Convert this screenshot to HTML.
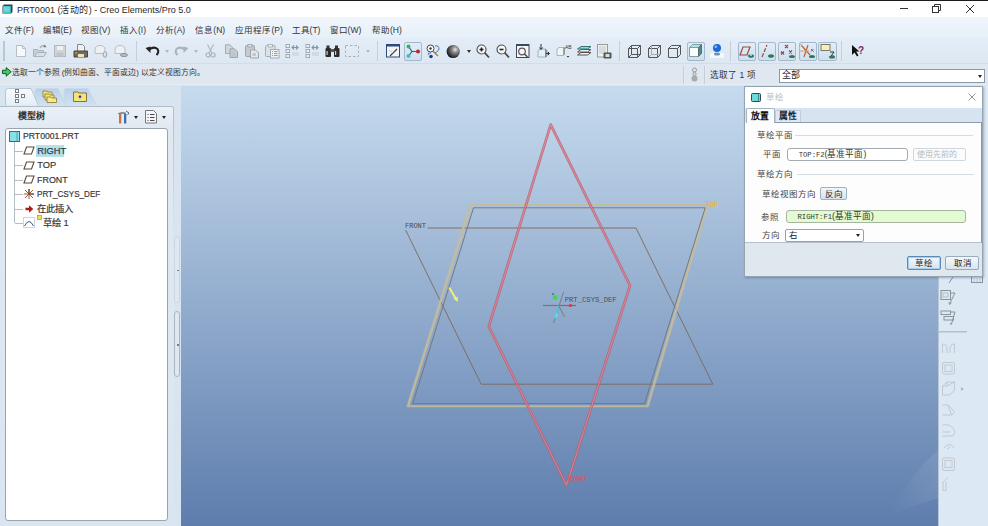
<!DOCTYPE html>
<html lang="zh-CN">
<head>
<meta charset="utf-8">
<style>
*{margin:0;padding:0;box-sizing:border-box}
html,body{width:988px;height:526px;overflow:hidden;background:#dfe9f3;font-family:"Liberation Sans",sans-serif;color:#222}
.a{position:absolute}
.t{position:absolute;white-space:nowrap;line-height:1}
svg{position:absolute;overflow:visible}
#topline{left:0;top:0;width:988px;height:1px;background:#1a1a1a}
#title{left:0;top:1px;width:988px;height:16px;background:#fff}
#menubar{left:0;top:17px;width:988px;height:21px;background:linear-gradient(#f1f6fc,#e7eff8)}
#toolbar{left:0;top:38px;width:988px;height:26px;background:linear-gradient(#e4edf7,#dce7f2)}
#status{left:0;top:64px;width:988px;height:21px;background:#dfe8f1}
#main{left:0;top:85px;width:988px;height:441px;background:#d8e5f1}
#vp{left:181px;top:86px;width:757px;height:440px;background:linear-gradient(#c6dbee,#5e7dad)}
#rtb{left:938px;top:86px;width:50px;height:440px;background:#dce8f3}
#tree{left:5px;top:128px;width:163px;height:393px;background:#fff;border:1px solid #9aa4ae;border-radius:3px}
.menu{font-size:8.5px;color:#333;top:26px}
.sep{position:absolute;width:2px;background:linear-gradient(90deg,#b4c0cc,#f4f8fc)}
.hb{position:absolute;border:1px solid #a4b8cc;border-radius:2px;background:linear-gradient(#e2edf8,#cddff0)}
.tr{font-size:9.3px;color:#333;-webkit-text-stroke:0.2px #444}
.dl{font-size:8.5px;color:#444}
.dd{position:absolute;width:0;height:0;border-left:2.5px solid transparent;border-right:2.5px solid transparent;border-top:3px solid #555}
</style>
</head>
<body>
<div id="topline" class="a"></div>
<div id="title" class="a"></div>
<!-- title icon -->
<svg style="left:2px;top:4px" width="11" height="10" viewBox="0 0 11 10"><path d="M0.5 2L2 0.5H10.5V8L9 9.5H0.5Z" fill="#2e4650"/><rect x="1" y="2" width="7.8" height="7" fill="#4cc4c8"/><rect x="2" y="3" width="5.5" height="4.5" fill="#6ad8dc"/></svg>
<div class="t" style="left:16.8px;top:4.6px;font-size:9.6px;color:#2a2a2a;transform:scaleX(0.94);transform-origin:0 0">PRT0001 (活动的) - Creo Elements/Pro 5.0</div>
<!-- window controls -->
<div class="a" style="left:900px;top:8px;width:8px;height:1px;background:#333"></div>
<svg style="left:932px;top:4px" width="10" height="9" viewBox="0 0 10 9"><rect x="0.5" y="2.5" width="6" height="6" fill="none" stroke="#333"/><path d="M2.5 2.5V0.5H8.5V6.5H6.5" fill="none" stroke="#333"/></svg>
<svg style="left:966px;top:4.5px" width="8" height="8" viewBox="0 0 8 8"><path d="M0 0L8 8M8 0L0 8" stroke="#333" stroke-width="1"/></svg>

<div id="menubar" class="a"></div>
<div class="t menu" style="left:5px">文件(F)</div>
<div class="t menu" style="left:42.5px">编辑(E)</div>
<div class="t menu" style="left:81px">视图(V)</div>
<div class="t menu" style="left:120px">插入(I)</div>
<div class="t menu" style="left:155.8px">分析(A)</div>
<div class="t menu" style="left:195.3px">信息(N)</div>
<div class="t menu" style="left:235.4px">应用程序(P)</div>
<div class="t menu" style="left:291.6px">工具(T)</div>
<div class="t menu" style="left:329.6px">窗口(W)</div>
<div class="t menu" style="left:372px">帮助(H)</div>

<div id="toolbar" class="a"></div>
<div class="a" style="left:0;top:63px;width:988px;height:1px;background:#d2dde8"></div><div class="a" style="left:0;top:64px;width:988px;height:1px;background:#eef4f9"></div>
<!-- grip -->
<div class="a" style="left:3px;top:41px;width:2px;height:20px;background:#b9c6d3"></div>
<!-- new -->
<svg style="left:15px;top:44px" width="14" height="14" viewBox="0 0 14 14"><path d="M1.5 1.5H7.5L10.5 4.5V12.5H1.5Z" fill="#f6f8fa" stroke="#b8bec6"/><path d="M7.5 1.5V4.5H10.5" fill="none" stroke="#b8bec6"/></svg>
<!-- open -->
<svg style="left:33px;top:44px" width="15" height="14" viewBox="0 0 15 14"><path d="M0.5 5.5H4.5L5.5 6.5H10.5V12.5H0.5Z" fill="#c9cfd5" stroke="#aab2ba"/><path d="M1.5 12.5L4 8.5H13.5L11 12.5Z" fill="#d9dee3" stroke="#aab2ba"/><path d="M7 4C8 1.5 11 1 12.5 2.5" fill="none" stroke="#a8b0b8" stroke-width="1.3"/><path d="M11.5 0.5L13.5 3L10.5 3.5Z" fill="#707880"/></svg>
<!-- save -->
<svg style="left:54px;top:44px" width="13" height="14" viewBox="0 0 13 14"><rect x="0.5" y="1.5" width="11" height="11" fill="#d0d5da" stroke="#b0b7be"/><rect x="3" y="2" width="6" height="4" fill="#eef1f4"/><rect x="2.5" y="8.5" width="7" height="4" fill="#c0c6cc"/></svg>
<!-- print -->
<svg style="left:73px;top:44px" width="16" height="15" viewBox="0 0 16 15"><path d="M4.5 0.5H9.5L11.5 2.5V7.5H4.5Z" fill="#eef0f2" stroke="#888"/><path d="M1 7H14.5V13H1Z" fill="#6d6a60" stroke="#4a473f"/><rect x="5" y="10" width="6" height="3" fill="#f0e0c0"/><rect x="2" y="8" width="2" height="1.5" fill="#d0903a"/></svg>
<!-- icon5 -->
<svg style="left:94px;top:44px" width="15" height="14" viewBox="0 0 15 14"><path d="M1 6Q1 1.5 6 1.5Q11 1.5 11 6V9.5H1Z" fill="#eef1f4" stroke="#b8bec6"/><ellipse cx="11" cy="10.5" rx="1.8" ry="2.8" fill="#dde2e7" stroke="#9aa2aa"/></svg>
<!-- icon6 -->
<svg style="left:114px;top:44px" width="15" height="14" viewBox="0 0 15 14"><path d="M1 6Q1 1.5 6 1.5Q11 1.5 11 6V9.5H1Z" fill="#eef1f4" stroke="#b8bec6"/><ellipse cx="10" cy="11" rx="3.5" ry="1.6" fill="#b6bcc2" stroke="#8c949c"/></svg>
<div class="sep" style="left:135.5px;top:41px;height:20px"></div>
<!-- undo -->
<svg style="left:145px;top:45px" width="15" height="12" viewBox="0 0 15 12"><path d="M4 4.5Q9 1 12.5 4Q14.5 7 11.5 10" fill="none" stroke="#222" stroke-width="2"/><path d="M0.5 3L5.5 1.5L5.5 8Z" fill="#222"/></svg>
<div class="dd" style="left:164.5px;top:50px;border-top-color:#b0b8c0"></div>
<!-- redo -->
<svg style="left:174px;top:45px" width="15" height="12" viewBox="0 0 15 12"><path d="M11 4.5Q6 1 2.5 4Q0.5 7 3.5 10" fill="none" stroke="#aab2ba" stroke-width="2"/><path d="M14.5 3L9.5 1.5L9.5 8Z" fill="#aab2ba"/></svg>
<div class="dd" style="left:193.5px;top:50px;border-top-color:#b0b8c0"></div>
<!-- cut -->
<svg style="left:205px;top:44px" width="11" height="14" viewBox="0 0 11 14"><path d="M2.5 0.5L7 9M8.5 0.5L4 9" stroke="#b0b8c0" stroke-width="1.2"/><circle cx="3" cy="11" r="2" fill="none" stroke="#a8b0b8" stroke-width="1.2"/><circle cx="8" cy="11" r="2" fill="none" stroke="#a8b0b8" stroke-width="1.2"/></svg>
<!-- copy -->
<svg style="left:225px;top:44px" width="14" height="15" viewBox="0 0 14 15"><path d="M0.5 0.8H5L7.5 3.3V9.5H0.5Z" fill="#d2d7dc" stroke="#a4acb4"/><path d="M5 4.8H9.5L12.5 7.8V13.5H5Z" fill="#c8ced4" stroke="#9ca4ac"/><path d="M6.5 8H10M6.5 10H11M6.5 12H11" stroke="#b0b8c0" stroke-width="0.8"/></svg>
<!-- paste -->
<svg style="left:245px;top:44px" width="15" height="15" viewBox="0 0 15 15"><rect x="0.5" y="1.5" width="9" height="11" rx="1" fill="#c4cad0" stroke="#9ca4ac"/><rect x="3" y="0.5" width="4" height="2.5" fill="#e0e4e8" stroke="#9ca4ac" stroke-width="0.8"/><path d="M5.5 6H10.5L13.5 9V14H5.5Z" fill="#e4e8ec" stroke="#9ca4ac"/><rect x="7.5" y="9" width="3.5" height="3" fill="#c0c6cc"/></svg>
<!-- paste special -->
<svg style="left:265px;top:44px" width="15" height="15" viewBox="0 0 15 15"><rect x="0.5" y="1.5" width="9.5" height="11" rx="1" fill="#dde1e5" stroke="#a4acb4"/><rect x="3" y="0.5" width="4.5" height="2.5" fill="#eceef0" stroke="#a4acb4" stroke-width="0.8"/><rect x="5.5" y="5.5" width="8.5" height="8.5" fill="#f0f2f4" stroke="#a4acb4"/><path d="M7 7.5H8M9 7.5H12.5M7 9.5H8M9 9.5H12.5M7 11.5H8M9 11.5H12.5" stroke="#8a929a" stroke-width="0.9"/></svg>
<!-- tree icons -->
<svg style="left:285px;top:44px" width="16" height="15" viewBox="0 0 16 15"><rect x="1" y="0.5" width="3.5" height="3" fill="#eef0f2" stroke="#a0a8b0"/><rect x="1" y="5.5" width="3.5" height="3" fill="#eef0f2" stroke="#a0a8b0"/><rect x="1" y="10.5" width="3.5" height="3" fill="#eef0f2" stroke="#a0a8b0"/><path d="M7 3.5H13M9 1.5L7 3.5L9 5.5M11 1.5L13 3.5L11 5.5" fill="none" stroke="#7a9aa8" stroke-width="1.1"/><path d="M7 9H14M7 11H14" stroke="#c4cad0"/></svg>
<svg style="left:305px;top:44px" width="16" height="15" viewBox="0 0 16 15"><rect x="1" y="0.5" width="3.5" height="3" fill="#eef0f2" stroke="#a0a8b0"/><rect x="1" y="5.5" width="3.5" height="3" fill="#eef0f2" stroke="#a0a8b0"/><rect x="1" y="10.5" width="3.5" height="3" fill="#eef0f2" stroke="#a0a8b0"/><path d="M7 3.5H13M9 1.5L7 3.5L9 5.5M11 1.5L13 3.5L11 5.5" fill="none" stroke="#7a9aa8" stroke-width="1.1"/><path d="M7 9H14M7 11H14" stroke="#c4cad0"/></svg>
<!-- binoculars -->
<svg style="left:325px;top:45px" width="15" height="13" viewBox="0 0 15 13"><rect x="0.5" y="3" width="5.5" height="9" rx="1" fill="#2a2a2a"/><rect x="9" y="3" width="5.5" height="9" rx="1" fill="#2a2a2a"/><rect x="1.5" y="0.5" width="3" height="3" fill="#333"/><rect x="10" y="0.5" width="3" height="3" fill="#333"/><rect x="5.5" y="4" width="4" height="3" fill="#555"/><rect x="1.5" y="6" width="1.2" height="4" fill="#ccc"/><rect x="10" y="6" width="1.2" height="4" fill="#ccc"/></svg>
<!-- select box -->
<svg style="left:345px;top:45px" width="15" height="13" viewBox="0 0 15 13"><rect x="0.5" y="0.5" width="13" height="11" fill="none" stroke="#a8b0b8" stroke-dasharray="2.5 2"/></svg>
<div class="dd" style="left:366px;top:50px;border-top-color:#b0b8c0"></div>
<div class="sep" style="left:376.5px;top:41px;height:20px"></div>
<!-- sketch view -->
<svg style="left:386px;top:44px" width="14" height="14" viewBox="0 0 14 14"><rect x="0.5" y="0.5" width="13" height="12.5" fill="#f2f5f8" stroke="#2c4a7a"/><rect x="0.5" y="0.5" width="13" height="2" fill="#2c4a7a"/><path d="M4 12L11 5" stroke="#444" stroke-width="1.3"/><path d="M3 6L7 9" stroke="#c8ccd0"/></svg>
<!-- highlighted csys -->
<div class="hb" style="left:404px;top:41.5px;width:18px;height:19px"></div>
<svg style="left:405px;top:44px" width="16" height="15" viewBox="0 0 16 15"><path d="M3.5 2.5L7 7.5L3.5 12M7 7.5H13" stroke="#2a6a7a" stroke-width="1.2" fill="none"/><circle cx="3.5" cy="2.5" r="2" fill="#3cb060"/><circle cx="3.5" cy="12" r="2" fill="#40c0c0"/><circle cx="13" cy="7.5" r="2" fill="#c02030"/></svg>
<!-- csys2 -->
<svg style="left:426px;top:44px" width="15" height="15" viewBox="0 0 15 15"><circle cx="4.5" cy="4.5" r="3.5" fill="#fff" stroke="#444" stroke-width="1"/><circle cx="4.5" cy="4.5" r="1.2" fill="#333"/><path d="M7 7L12 12" stroke="#b08040" stroke-width="1.5"/><path d="M9 2Q13 1 13 5Q12 8 9 9" fill="none" stroke="#4a78b0"/><circle cx="5" cy="12.5" r="1.8" fill="#203a90"/><path d="M2 11Q2 8 5 9" fill="none" stroke="#4a78b0"/></svg>
<!-- sphere -->
<svg style="left:446px;top:44px" width="15" height="15" viewBox="0 0 15 15"><defs><radialGradient id="sph" cx="0.65" cy="0.35" r="0.7"><stop offset="0" stop-color="#e8e8e8"/><stop offset="0.35" stop-color="#888"/><stop offset="1" stop-color="#111"/></radialGradient></defs><circle cx="7.2" cy="7.5" r="6.6" fill="url(#sph)"/></svg>
<div class="dd" style="left:466.5px;top:50px;border-top-color:#333"></div>
<!-- zoom in -->
<svg style="left:476px;top:44px" width="14" height="15" viewBox="0 0 14 15"><circle cx="5.5" cy="5.5" r="4.5" fill="#fafafa" stroke="#555" stroke-width="1.2"/><path d="M3.5 5.5H7.5M5.5 3.5V7.5" stroke="#222" stroke-width="1.6"/><path d="M8.5 8.5L13 13.5" stroke="#444" stroke-width="1.8"/></svg>
<!-- zoom out -->
<svg style="left:496px;top:44px" width="14" height="15" viewBox="0 0 14 15"><circle cx="5.5" cy="5.5" r="4.5" fill="#fafafa" stroke="#555" stroke-width="1.2"/><path d="M3.5 5.5H7.5" stroke="#222" stroke-width="1.6"/><path d="M8.5 8.5L13 13.5" stroke="#444" stroke-width="1.8"/></svg>
<!-- refit -->
<svg style="left:516px;top:44px" width="14" height="15" viewBox="0 0 14 15"><rect x="0.5" y="0.5" width="12.5" height="13" fill="#f4f6f8" stroke="#445"/><rect x="0.5" y="0.5" width="12.5" height="1.5" fill="#2c4a7a"/><circle cx="6" cy="7.5" r="3.3" fill="none" stroke="#555" stroke-width="1.2"/><path d="M8.5 10L11.5 13" stroke="#444" stroke-width="1.4"/></svg>
<!-- orient -->
<svg style="left:536px;top:44px" width="14" height="15" viewBox="0 0 14 15"><path d="M2 6.5L5 5H9.5V13H2Z" fill="#dff3f3" stroke="#aab"/><path d="M9.5 5V13L11 12V7Z" fill="#9ac" stroke="#889"/><path d="M5 0V5M3.5 3.5L5 5.5L6.5 3.5" stroke="#333" fill="none"/><path d="M10 9.5H13.5M12 8L13.5 9.5L12 11" stroke="#333" fill="none"/></svg>
<!-- saved views -->
<svg style="left:556px;top:44px" width="15" height="15" viewBox="0 0 15 15"><path d="M1 5L3 3.5H7.5V11.5H1Z" fill="#f2f4f6" stroke="#aab2ba"/><path d="M7.5 3.5V11.5L9 10.5V3Z" fill="#889aa8"/><text x="9" y="5" font-size="5" font-family="Liberation Sans" fill="#333">AB</text><path d="M10.5 12L12 13.5L13.5 12Z" fill="#333"/></svg>
<!-- layers -->
<svg style="left:577px;top:44px" width="15" height="15" viewBox="0 0 15 15"><path d="M0.5 11L4 8.5H14L10.5 11Z" fill="#f0f0f0" stroke="#555"/><path d="M0.5 8L4 5.5H14L10.5 8Z" fill="#f0f0f0" stroke="#555"/><path d="M0.5 5L4 2.5H14L10.5 5Z" fill="#7fe0e0" stroke="#3a7070"/></svg>
<!-- model display -->
<svg style="left:597px;top:44px" width="16" height="15" viewBox="0 0 16 15"><rect x="0.5" y="0.5" width="10" height="12.5" fill="#eef0f2" stroke="#999"/><path d="M2 3H9M2 5H9M2 7H9M2 9H9" stroke="#c4c8cc"/><rect x="6.5" y="8.5" width="8" height="6" rx="1" fill="#555"/><rect x="8.5" y="10" width="4" height="3" fill="#ddd"/></svg>
<div class="sep" style="left:619px;top:41px;height:20px"></div>
<!-- wireframe -->
<svg style="left:628px;top:45px" width="14" height="13" viewBox="0 0 14 13"><path d="M0.5 3.5H9.5V12.5H0.5Z M3.5 0.5H12.5V9.5H3.5Z M0.5 3.5L3.5 0.5M9.5 3.5L12.5 0.5M9.5 12.5L12.5 9.5M0.5 12.5L3.5 9.5" fill="none" stroke="#555"/></svg>
<!-- hidden line -->
<svg style="left:648px;top:45px" width="14" height="13" viewBox="0 0 14 13"><path d="M0.5 3.5H9.5V12.5H0.5Z M0.5 3.5L3.5 0.5H12.5V9.5L9.5 12.5M9.5 3.5L12.5 0.5" fill="none" stroke="#555"/><path d="M3.5 0.5V9.5H12.5M0.5 12.5L3.5 9.5" fill="none" stroke="#aaa"/></svg>
<!-- no hidden -->
<svg style="left:668px;top:45px" width="14" height="13" viewBox="0 0 14 13"><path d="M0.5 3.5H9.5V12.5H0.5Z M0.5 3.5L3.5 0.5H12.5V9.5L9.5 12.5M9.5 3.5L12.5 0.5" fill="none" stroke="#555"/></svg>
<!-- shaded highlighted -->
<div class="hb" style="left:687px;top:41.5px;width:18px;height:19px"></div>
<svg style="left:689px;top:44px" width="14" height="14" viewBox="0 0 14 14"><path d="M0.5 3.5H9.5V12.5H0.5Z" fill="#f8fcfc" stroke="#8a9aa0"/><path d="M0.5 3.5L3.5 0.5H12.5L9.5 3.5Z" fill="#a8e8e8" stroke="#8a9aa0"/><path d="M9.5 3.5L12.5 0.5V9.5L9.5 12.5Z" fill="#4a8a8a" stroke="#5a7070"/></svg>
<!-- blue ball -->
<svg style="left:709px;top:43px" width="16" height="16" viewBox="0 0 16 16"><rect x="1" y="10" width="14" height="5" fill="#f4f8fb"/><ellipse cx="8" cy="11" rx="3" ry="1.5" fill="#7090b0"/><circle cx="8" cy="5" r="4" fill="#1a6ad8"/><circle cx="6.8" cy="3.8" r="1.3" fill="#8ec0ff"/></svg>
<div class="sep" style="left:729.5px;top:41px;height:20px"></div>
<!-- datum display buttons -->
<div class="hb" style="left:737.5px;top:41.5px;width:18px;height:19px"></div>
<div class="hb" style="left:757.5px;top:41.5px;width:18px;height:19px"></div>
<div class="hb" style="left:778px;top:41.5px;width:18px;height:19px"></div>
<div class="hb" style="left:798.5px;top:41.5px;width:18px;height:19px"></div>
<div class="hb" style="left:818px;top:41.5px;width:18.5px;height:19px"></div>
<svg style="left:738px;top:43px" width="18" height="17" viewBox="0 0 18 17"><path d="M2 12L5 4H12L9 12Z" fill="none" stroke="#9a4a3a" stroke-width="1.2"/><ellipse cx="13" cy="13" rx="3" ry="1.8" fill="#2a7a5a"/><circle cx="13" cy="12" r="1" fill="#cde"/></svg>
<svg style="left:758px;top:43px" width="18" height="17" viewBox="0 0 18 17"><path d="M4 14L9 2" stroke="#9a4a3a" stroke-width="1.2" stroke-dasharray="4 1.5"/><ellipse cx="13" cy="13" rx="3" ry="1.8" fill="#2a7a5a"/></svg>
<svg style="left:778.5px;top:43px" width="18" height="17" viewBox="0 0 18 17"><path d="M6 2L9 5M9 2L6 5M2 8.5L5 11.5M5 8.5L2 11.5M10 7.5L13 10.5M13 7.5L10 10.5" stroke="#a04040" stroke-width="1.1"/><ellipse cx="13" cy="13.5" rx="3" ry="1.6" fill="#2a7a5a"/></svg>
<svg style="left:799px;top:43px" width="18" height="17" viewBox="0 0 18 17"><path d="M3 3L11 12M9 2L5 14" stroke="#c06030" stroke-width="1.2"/><path d="M1 8H10" stroke="#d0a070"/><path d="M12 6L14.5 8.5M14.5 6L12 8.5" stroke="#666"/><ellipse cx="13" cy="13.5" rx="3" ry="1.6" fill="#2a7a5a"/><text x="1" y="4" font-size="4" fill="#555">Y</text></svg>
<svg style="left:818.5px;top:43px" width="18" height="17" viewBox="0 0 18 17"><rect x="2" y="1.5" width="9" height="6" fill="#f8f2a8" stroke="#777"/><path d="M11 9H15L12 13H15" stroke="#333" fill="none"/><ellipse cx="13" cy="14" rx="3" ry="1.5" fill="#2a7a5a"/></svg>
<div class="sep" style="left:841px;top:41px;height:20px"></div>
<!-- help -->
<svg style="left:851px;top:44px" width="14" height="14" viewBox="0 0 14 14"><path d="M1 1L1 11L3.5 8.5L6 12.5L7.5 11.5L5.2 7.5H8.5Z" fill="#111"/><text x="7" y="9.5" font-size="10" font-weight="bold" font-family="Liberation Sans" fill="#8a1a6a">?</text></svg>
<div id="status" class="a"></div>
<svg style="left:1.5px;top:67px" width="10" height="10" viewBox="0 0 10 10"><path d="M0.5 3.2H4.2V0.6L9.2 4.8L4.2 9.2V6.6H0.5Z" fill="#3ecf5a" stroke="#114a1e" stroke-width="0.9"/></svg>
<div class="t" style="left:11.5px;top:68.5px;font-size:7.8px;color:#333">选取一个参照 (例如曲面、平面或边) 以定义视图方向。</div>
<div class="sep" style="left:683px;top:66px;height:18px"></div>
<svg style="left:690px;top:67px" width="9" height="15" viewBox="0 0 9 15"><circle cx="4.5" cy="3" r="2" fill="none" stroke="#999"/><circle cx="4.5" cy="7" r="1.6" fill="none" stroke="#999"/><circle cx="4.5" cy="11.5" r="3" fill="#aaa"/></svg>
<div class="sep" style="left:703.5px;top:66px;height:18px"></div>
<div class="t" style="left:710px;top:70.5px;font-size:8.6px;color:#333">选取了 1 项</div>
<div class="a" style="left:778.5px;top:68.5px;width:206px;height:14px;background:#fff;border:1px solid #8c98a6"></div>
<div class="t" style="left:782px;top:70.5px;font-size:9px;color:#222">全部</div>
<div class="dd" style="left:977.5px;top:74.5px;border-top-color:#222"></div>
<div id="main" class="a"></div>
<div class="a" style="left:0;top:84px;width:988px;height:1px;background:#e6eef5"></div>
<div id="vp" class="a"></div>
<svg style="left:0;top:0" width="988" height="526" viewBox="0 0 988 526">
<!-- watermark -->
<defs><linearGradient id="wm" x1="0" y1="0" x2="1" y2="0"><stop offset="0" stop-color="#fff" stop-opacity="0"/><stop offset="0.6" stop-color="#fff" stop-opacity="0.05"/><stop offset="1" stop-color="#fff" stop-opacity="0.08"/></linearGradient></defs><path d="M938 450Q915 470 890 508L892 514Q915 505 938 498Z" fill="url(#wm)"/>
<!-- FRONT plane -->
<path d="M427.5 228H636L712.8 384.2H481.2L405.7 230.2" fill="none" stroke="#7e6858" stroke-width="0.9"/>
<text x="405" y="228" font-family="Liberation Mono,monospace" font-size="7.2" fill="#4a4a4a" textLength="21" lengthAdjust="spacingAndGlyphs">FRONT</text>
<!-- TOP plane -->
<path d="M470.5 205H707.3L647.5 406.3H408Z" fill="none" stroke="#c8bc92" stroke-opacity="0.85" stroke-width="2"/><path d="M707.3 205L647.5 406.3M408 406.3L470.5 205" fill="none" stroke="#c8bea4" stroke-opacity="0.35" stroke-width="3.6"/>
<path d="M473.5 207.8H705.2L644.5 403.6H412.8Z" fill="none" stroke="#727a80" stroke-width="1"/>
<text x="706" y="207" font-family="Liberation Mono,monospace" font-size="8.5" font-weight="bold" fill="#e8b44a" textLength="11.5" lengthAdjust="spacingAndGlyphs">TOP</text>
<!-- RIGHT plane -->
<path d="M550.7 124.6L630 285.5L566.5 485.4L488.8 326.5Z" fill="none" stroke="#c85868" stroke-width="2.7" stroke-opacity="0.8" stroke-linejoin="round"/><path d="M550.7 124.6L630 285.5L566.5 485.4L488.8 326.5Z" fill="none" stroke="#e8b4c0" stroke-width="0.8" stroke-opacity="0.6"/>

<text x="568" y="481" font-family="Liberation Mono,monospace" font-size="6.5" font-weight="bold" fill="#d05868" fill-opacity="0.8" textLength="19" lengthAdjust="spacingAndGlyphs">RIGHT</text>
<!-- yellow arrow -->
<path d="M449.2 287.5L456 299" stroke="#eef07a" stroke-width="2"/>
<path d="M453.5 298.5L457.5 302L458 297Z" fill="#f2f070"/>
<!-- CSYS -->
<path d="M542.8 305.5H558.7" stroke="#8a6e6a" stroke-width="1.2"/>
<path d="M558.7 305.5H576" stroke="#c05050" stroke-width="1.2"/>
<circle cx="570.5" cy="305.5" r="1.6" fill="#e03040"/>
<path d="M563.5 292L553.5 323" stroke="#7a7a86" stroke-width="1"/>
<path d="M558.7 305.5L555 317" stroke="#40d0e0" stroke-width="1.5"/>
<path d="M558.7 305.5L564.5 317" stroke="#7a7486" stroke-width="1"/>
<circle cx="555" cy="297.6" r="2.3" fill="#3ed84a"/>
<circle cx="553" cy="294" r="0.8" fill="#335"/>
<path d="M554 319L556.5 312L558 316Z" fill="#58e0f0"/>
<text x="564.7" y="302" font-family="Liberation Mono,monospace" font-size="7" fill="#505050" textLength="52" lengthAdjust="spacingAndGlyphs">PRT_CSYS_DEF</text>
</svg>
<div id="rtb" class="a"></div>
<div class="a" style="left:938px;top:86px;width:1px;height:440px;background:#b4c6d8"></div>
<svg style="left:938px;top:86px" width="50" height="440" viewBox="938 86 50 440">
<g fill="none" stroke="#8a929a" stroke-width="1">
<path d="M941 276.5H950M953 277L949 283"/>
<rect x="971.5" y="275.5" width="11" height="7"/>
<path d="M974 278V282M977 278V282M980 278V282" stroke="#c0c6cc"/>
<rect x="941" y="290.5" width="9.5" height="9"/><rect x="943" y="293" width="5" height="4" stroke="#b8bec4"/>
<path d="M951 293H955L950 303"/><path d="M949 302L949.5 304.5L951.5 303" />
<rect x="941" y="311" width="9.5" height="3.5"/><rect x="944" y="316.5" width="9.5" height="3.5"/>
<path d="M951 312H955L951.5 324M950.5 323L951 325"/>
</g>
<rect x="938.5" y="331" width="28.5" height="1.5" fill="#b6c0ca"/>
<g fill="none" stroke="#c2c8ce" stroke-width="1">
<path d="M942.5 344Q947 344 947 349V353M954.5 344Q950 344 950 349V353M942.5 344V353M954.5 344V353" />
<rect x="942.5" y="362.5" width="12" height="11.5" rx="1.5"/><rect x="945" y="365" width="7" height="6.5"/>
<path d="M942.5 386L947 382H954.5V390L950 395H942.5Z M947 382V386H942.5M947 386L954.5 382" />
<path d="M942.5 405H948L954.5 411.5L951.5 415H942.5M948 405L951.5 415" />
<path d="M942.5 425Q952 423 955 432L953 436H942.5" /><path d="M942.5 432H950"/>
<path d="M944 448Q949 441 954 448"/><path d="M947 449L950 447"/>
<rect x="942.5" y="458" width="12" height="12.5" rx="1.5"/><rect x="945" y="460.5" width="7" height="7"/>
<path d="M948 477.5L943 482V490.5H946V482" />
</g>
<path d="M961 387L964 389L961 391Z" fill="#b0b8c0"/>
</svg>
<!-- left panel -->
<svg style="left:0;top:86px" width="181" height="20" viewBox="0 0 181 20">
<defs><linearGradient id="tb1" x1="0" y1="0" x2="0" y2="1"><stop offset="0" stop-color="#f8fbfe"/><stop offset="1" stop-color="#e4edf6"/></linearGradient>
<linearGradient id="tb2" x1="0" y1="0" x2="0" y2="1"><stop offset="0" stop-color="#bad0ea"/><stop offset="1" stop-color="#d2e1f0"/></linearGradient></defs>
<path d="M64 19.5V5Q64 2.5 67 2.5H88L96.5 19.5" fill="url(#tb2)" stroke="#c8d8e8"/>
<path d="M35 19.5V5Q35 2.5 38 2.5H58L66 19.5" fill="url(#tb2)" stroke="#c8d8e8"/>
<path d="M5.5 19.5V5Q5.5 2.5 8.5 2.5H31L38.5 19.5" fill="url(#tb1)" stroke="#b8c6d4"/>
</svg>
<svg style="left:14px;top:89px" width="12" height="14" viewBox="0 0 12 14"><rect x="1.5" y="0.5" width="3" height="3" fill="#fff" stroke="#7a7f84"/><rect x="1.5" y="5.5" width="3" height="3" fill="#fff" stroke="#7a7f84"/><rect x="1.5" y="10.5" width="3" height="3" fill="#fff" stroke="#7a7f84"/><rect x="7.5" y="5.5" width="3" height="3" fill="#fff" stroke="#7a7f84"/></svg>
<svg style="left:42px;top:88px" width="16" height="15" viewBox="0 0 16 15"><path d="M1 3H5L6 4H10V9H1Z" fill="#f4e27a" stroke="#8a7a30" stroke-width="0.8"/><path d="M3 6H7L8 7H12V12H3Z" fill="#f4e27a" stroke="#8a7a30" stroke-width="0.8"/><path d="M5 9H9L10 10H14.5V14.5H5Z" fill="#f8e88a" stroke="#8a7a30" stroke-width="0.8"/></svg>
<svg style="left:73px;top:90px" width="14" height="12" viewBox="0 0 14 12"><path d="M0.5 2H5L6 3H13.5V11.5H0.5Z" fill="#f4e27a" stroke="#7a6a30" stroke-width="0.9"/><path d="M7 5L8.5 6.8L7 8.5L5.5 6.8Z" fill="#2a3a8a"/></svg>
<div class="a" style="left:0;top:105.5px;width:173.5px;height:421px;background:linear-gradient(#eaf0f6 0px,#e0e9f2 22px,#d9e5f1 100%);border-top:1px solid #b0bcc8;border-radius:0 3px 0 0"></div><div class="a" style="left:172.5px;top:106.5px;width:1px;height:140px;background:linear-gradient(#b0bcc8,rgba(176,188,200,0))"></div>
<div class="t" style="left:18px;top:112px;font-size:9px;font-weight:bold;color:#333">模型树</div>
<svg style="left:116px;top:110px" width="14" height="14" viewBox="0 0 14 14"><path d="M1.5 3.5Q5 1 10 2.5L9 4Q6 3 4 5Z" fill="#7a8a9a"/><rect x="3" y="4" width="2.3" height="9.5" fill="#d07040"/><rect x="8" y="3.5" width="2.3" height="10" fill="#3a70b0"/><path d="M10 1L13 3L11.5 5" fill="none" stroke="#666"/></svg>
<div class="dd" style="left:133.5px;top:115.5px;border-top-color:#222"></div>
<svg style="left:144.5px;top:110px" width="13" height="14" viewBox="0 0 13 14"><path d="M0.5 0.5H8.5L11.5 3.5V13H0.5Z" fill="#f4f6f8" stroke="#777"/><path d="M2.5 4.5H3.5M5 4.5H9.5M2.5 7.5H3.5M5 7.5H9.5M2.5 10.5H3.5M5 10.5H9.5" stroke="#445"/></svg>
<div class="dd" style="left:162px;top:115.5px;border-top-color:#222"></div>
<div id="tree" class="a"></div>
<!-- tree contents -->
<svg style="left:9px;top:131px" width="11" height="11" viewBox="0 0 11 11"><rect x="0.5" y="0.5" width="10" height="10" fill="#8ae0e8" stroke="#3a6a80"/><path d="M8 1V10" stroke="#5aa0b0"/></svg>
<div class="t tr" style="left:22.5px;top:132px;transform:scaleX(0.93);transform-origin:0 0">PRT0001.PRT</div>
<div class="a" style="left:36px;top:144.8px;width:28px;height:12.3px;background:#b6e0ea"></div>
<div class="a" style="left:14px;top:142px;width:1px;height:81px;background:#b4bcc4"></div>
<div class="a" style="left:15px;top:150.5px;width:8px;height:1px;background:#b4bcc4"></div>
<div class="a" style="left:15px;top:165px;width:8px;height:1px;background:#b4bcc4"></div>
<div class="a" style="left:15px;top:179.5px;width:8px;height:1px;background:#b4bcc4"></div>
<div class="a" style="left:15px;top:194px;width:8px;height:1px;background:#b4bcc4"></div>
<div class="a" style="left:15px;top:208.5px;width:8px;height:1px;background:#b4bcc4"></div>
<div class="a" style="left:15px;top:223px;width:8px;height:1px;background:#b4bcc4"></div>
<svg style="left:23px;top:146px" width="12" height="9" viewBox="0 0 12 9"><path d="M1 8L3.5 1H11L8.5 8Z" fill="none" stroke="#5a4a3a" stroke-width="1.1"/></svg>
<svg style="left:23px;top:160.5px" width="12" height="9" viewBox="0 0 12 9"><path d="M1 8L3.5 1H11L8.5 8Z" fill="none" stroke="#5a4a3a" stroke-width="1.1"/></svg>
<svg style="left:23px;top:175px" width="12" height="9" viewBox="0 0 12 9"><path d="M1 8L3.5 1H11L8.5 8Z" fill="none" stroke="#5a4a3a" stroke-width="1.1"/></svg>
<svg style="left:23px;top:188px" width="12" height="12" viewBox="0 0 12 12"><path d="M6 1V11M1 6H11M2 2L10 10M10 2L2 10" stroke="#b05a2a" stroke-width="1"/><path d="M6 1V6H11" stroke="#444" stroke-width="1.1" fill="none"/></svg>
<svg style="left:25px;top:205px" width="9" height="8" viewBox="0 0 9 8"><path d="M0.5 2.7H4V0.3L8.3 4L4 7.7V5.3H0.5Z" fill="#b0181e"/></svg>
<svg style="left:22.5px;top:217px" width="12" height="11" viewBox="0 0 12 11"><rect x="0.5" y="0.5" width="11" height="10" fill="none" stroke="#7a9aaa" stroke-width="0.8" stroke-dasharray="1 1"/><path d="M1.5 9Q6 0 10.5 9" fill="none" stroke="#3a5a8a" stroke-width="1"/></svg>
<svg style="left:36.5px;top:215px" width="5" height="5" viewBox="0 0 5 5"><rect x="0.5" y="0.5" width="4" height="4" fill="#f0e060" stroke="#8a8a20" stroke-width="0.6"/></svg>
<div class="t tr" style="left:37.2px;top:146.5px;color:#1e3e48;-webkit-text-stroke:0.25px #2a4a55">RIGHT</div>
<div class="t tr" style="left:37.2px;top:161px">TOP</div>
<div class="t tr" style="left:37.2px;top:175.5px;transform:scaleX(0.96);transform-origin:0 0">FRONT</div>
<div class="t tr" style="left:37.2px;top:190px;transform:scaleX(0.87);transform-origin:0 0">PRT_CSYS_DEF</div>
<div class="t tr" style="left:37.2px;top:204.5px">在此插入</div>
<div class="t tr" style="left:43px;top:219px">草绘 1</div>
<!-- sash handles -->
<div class="a" style="left:173.5px;top:236px;width:6px;height:67px;border:1px solid #cbd6e0;border-radius:3px;background:#dde8f2"></div>
<div class="a" style="left:177px;top:269.5px;width:1.5px;height:1.5px;background:#7a8088"></div>
<div class="a" style="left:173.5px;top:311px;width:6px;height:66px;border:1px solid #a9b4be;border-radius:3px;background:#dde8f2"></div>
<div class="a" style="left:177px;top:344px;width:1.5px;height:1.5px;background:#7a8088"></div>
<!-- DIALOG -->
<div class="a" style="left:744px;top:85.5px;width:239px;height:191px;background:#dfe7ef;border:1px solid #96a4b2;box-shadow:1px 1px 2px rgba(40,60,90,.35)"></div>
<div class="a" style="left:745px;top:86.5px;width:237px;height:21px;background:#fff"></div>
<svg style="left:751px;top:92.5px" width="10" height="9" viewBox="0 0 10 9"><rect x="0.5" y="0.5" width="9" height="8" rx="1" fill="#6fd8d8" stroke="#2a4a55"/><path d="M7.5 1V8" stroke="#3a8a90"/></svg>
<div class="t" style="left:766px;top:93px;font-size:8.5px;color:#b8bcc0">草绘</div>
<svg style="left:967.5px;top:92.5px" width="8" height="8" viewBox="0 0 8 8"><path d="M0.5 0.5L7.5 7.5M7.5 0.5L0.5 7.5" stroke="#888" stroke-width="0.9"/></svg>
<div class="a" style="left:745px;top:107.5px;width:237px;height:15px;background:#d6e3f0"></div>
<div class="a" style="left:775px;top:109.5px;width:25.5px;height:13px;background:#dfe9f4;border:1px solid #c0ccd8;border-bottom:none;border-radius:2px 2px 0 0"></div>
<div class="a" style="left:745px;top:122px;width:236.5px;height:121px;background:#fdfdfe;border-right:1px solid #8898a8;border-bottom:1px solid #b4c0cc"></div>
<div class="a" style="left:775px;top:122px;width:206.5px;height:1px;background:#8c9cac"></div>
<div class="a" style="left:745.5px;top:108px;width:29.5px;height:15px;background:#fbfcfe;border:1px solid #a8b4c0;border-bottom:none;border-radius:2px 2px 0 0"></div>
<div class="t" style="left:751px;top:111.5px;font-size:8.8px;font-weight:bold;color:#111">放置</div>
<div class="t" style="left:778.5px;top:111.5px;font-size:8.8px;font-weight:bold;color:#222">属性</div>
<div class="t dl" style="left:756.5px;top:130.5px">草绘平面</div>
<div class="a" style="left:795px;top:134.5px;width:178px;height:1px;background:#d4dbe2"></div>
<div class="t dl" style="left:763.3px;top:149.5px">平面</div>
<div class="a" style="left:786.5px;top:147.5px;width:121px;height:13px;background:#fff;border:1px solid #a2abb4;border-radius:3px"></div>
<div class="t" style="left:798.7px;top:150px;font-size:8.6px;color:#333"><span style="font-family:'Liberation Mono',monospace;font-size:7.2px">TOP:F2</span>(基准平面)</div>
<div class="a" style="left:913px;top:147.5px;width:53px;height:13.5px;background:#fbfcfd;border:1px solid #d0d6dc;border-radius:2px"></div>
<div class="t" style="left:917px;top:150.5px;font-size:8px;color:#b4b8bc">使用先前的</div>
<div class="t dl" style="left:756.5px;top:169.5px">草绘方向</div>
<div class="a" style="left:796.5px;top:173.5px;width:177px;height:1px;background:#d4dbe2"></div>
<div class="t dl" style="left:762px;top:189.5px">草绘视图方向</div>
<div class="a" style="left:819.5px;top:187px;width:27px;height:13px;background:linear-gradient(#f2f6fa,#d8e2ec);border:1px solid #9eb0c2;border-radius:2px"></div>
<div class="t" style="left:824.5px;top:189.5px;font-size:8.5px;color:#222">反向</div>
<div class="t dl" style="left:761px;top:212.5px">参照</div>
<div class="a" style="left:785.5px;top:210px;width:180px;height:12.5px;background:#e2fbd2;border:1px solid #a6b4a0;border-radius:3px"></div>
<div class="t" style="left:797.5px;top:212px;font-size:8.6px;color:#333"><span style="font-family:'Liberation Mono',monospace;font-size:7.2px">RIGHT:F1</span>(基准平面)</div>
<div class="t dl" style="left:762px;top:231px">方向</div>
<div class="a" style="left:784.5px;top:228.5px;width:79px;height:13px;background:#fff;border:1px solid #96a2ae;border-radius:2px"></div>
<div class="t" style="left:788.5px;top:231px;font-size:8.5px;color:#222">右</div>
<div class="dd" style="left:855.5px;top:234px;border-top-color:#222"></div>
<div class="a" style="left:906.5px;top:255.5px;width:34.5px;height:14px;background:linear-gradient(#f4f8fc,#d6e2ee);border:1px solid #5a8ab8;border-radius:2px;box-shadow:inset 0 0 0 1px #a8cdf0"></div>
<div class="t" style="left:915px;top:258.5px;font-size:8.5px;color:#222">草绘</div>
<div class="a" style="left:945px;top:255.5px;width:34px;height:14px;background:linear-gradient(#f4f8fc,#dae4ee);border:1px solid #9aaabb;border-radius:2px"></div>
<div class="t" style="left:953.5px;top:258.5px;font-size:8.5px;color:#222">取消</div>
</body>
</html>
